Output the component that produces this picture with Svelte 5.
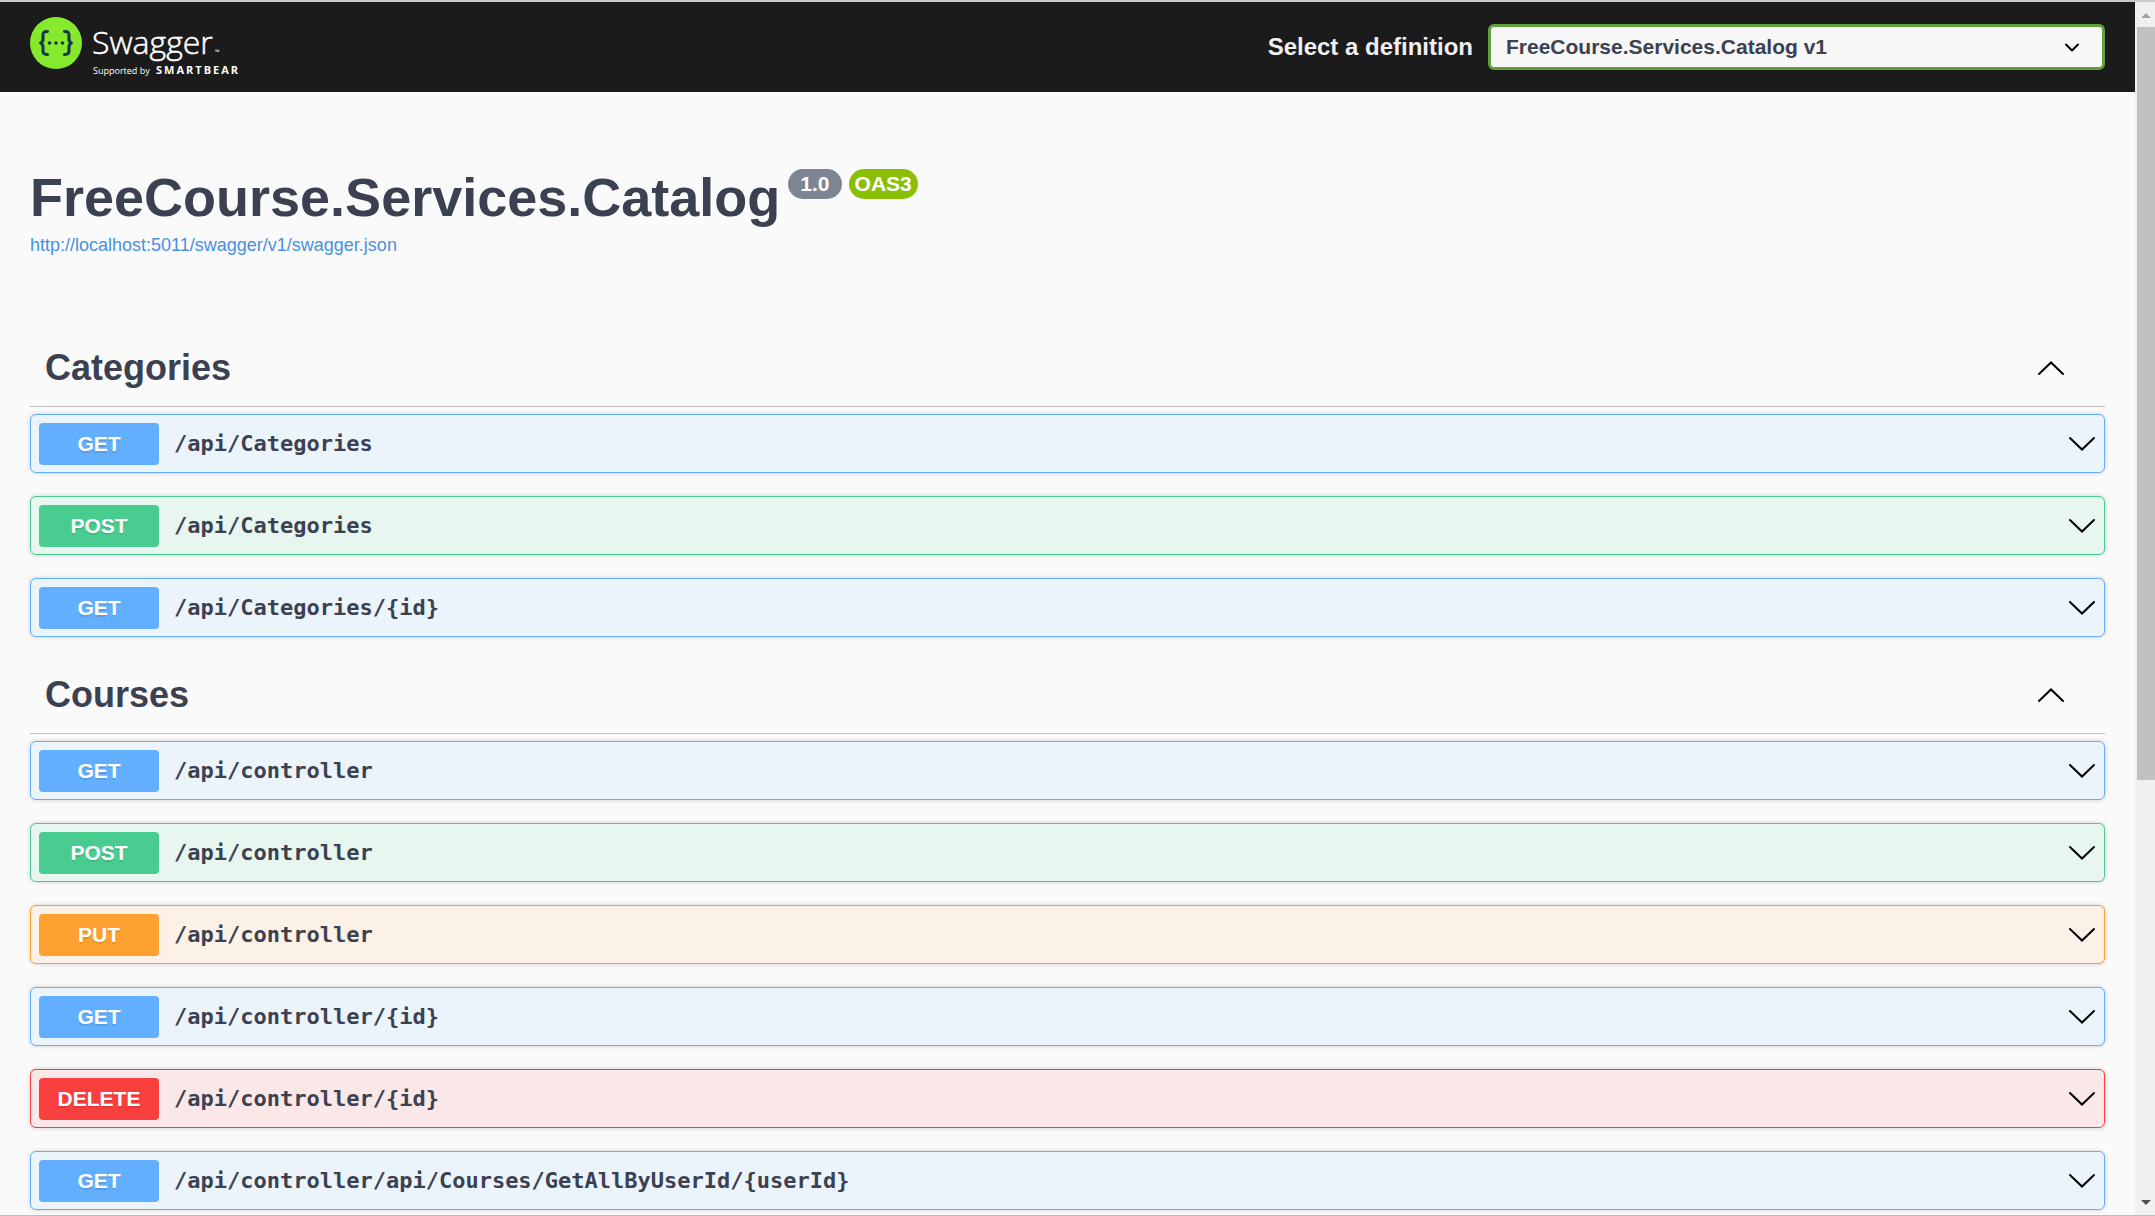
<script>
  const definitions = ['FreeCourse.Services.Catalog v1'];
  let selected = $state(definitions[0]);

  let sections = $state([
    {
      name: 'Categories',
      open: true,
      operations: [
        { method: 'get', path: '/api/Categories' },
        { method: 'post', path: '/api/Categories' },
        { method: 'get', path: '/api/Categories/{id}' }
      ]
    },
    {
      name: 'Courses',
      open: true,
      operations: [
        { method: 'get', path: '/api/controller' },
        { method: 'post', path: '/api/controller' },
        { method: 'put', path: '/api/controller' },
        { method: 'get', path: '/api/controller/{id}' },
        { method: 'delete', path: '/api/controller/{id}' },
        { method: 'get', path: '/api/controller/api/Courses/GetAllByUserId/{userId}' }
      ]
    }
  ]);
</script>

{#snippet chevron(down)}
  <svg class="chevron" class:down width="30" height="30" viewBox="0 0 30 30" aria-hidden="true">
    <path d="M3 21 15 9.500 27 21" />
  </svg>
{/snippet}

<div class="window">
  <div class="page">
    <header class="topbar">
      <a class="logo" href="#top" aria-label="Swagger, supported by SmartBear">
        <svg width="220" height="60" viewBox="0 0 220 60">
          <circle cx="26" cy="26" r="26" fill="#85ea2d" />
          <g fill="none" stroke="#173647" stroke-width="3" stroke-linecap="round" stroke-linejoin="round">
            <path d="M17.500 14.500c-3.800-.2-4.700 1.300-4.500 4.500.2 3.600.3 6.300-2.500 7 2.800.7 2.700 3.400 2.500 7-.2 3.200.7 4.700 4.500 4.500" />
            <path d="M34.500 14.500c3.800-.2 4.700 1.300 4.500 4.500-.2 3.600-.3 6.300 2.500 7-2.800.7-2.700 3.400-2.500 7 .2 3.200-.7 4.700-4.500 4.500" />
          </g>
          <g fill="#173647">
            <circle cx="19.500" cy="26" r="1.800" />
            <circle cx="26" cy="26" r="1.800" />
            <circle cx="32.500" cy="26" r="1.800" />
          </g>
          <text class="wordmark" x="62" y="37">Swagger</text>
          <text class="tm" x="185" y="37">™</text>
          <text class="support" x="63" y="57">Supported by</text>
          <text class="brand" x="126" y="57">SMARTBEAR</text>
        </svg>
      </a>
      <form class="definition">
        <label for="definition">Select a definition</label>
        <div class="select-box">
          <select id="definition" bind:value={selected}>
            {#each definitions as d}
              <option value={d}>{d}</option>
            {/each}
          </select>
          <svg width="18" height="12" viewBox="0 0 18 12" aria-hidden="true">
            <path d="M3 2.500 9 8.500 15 2.500" />
          </svg>
        </div>
      </form>
    </header>

    <main>
      <div class="info">
        <div class="title-row">
          <h1>FreeCourse.Services.Catalog</h1>
          <div class="badges">
            <span class="badge version">1.0</span>
            <span class="badge oas">OAS3</span>
          </div>
        </div>
        <a href="http://localhost:5011/swagger/v1/swagger.json">http://localhost:5011/swagger/v1/swagger.json</a>
      </div>

      {#each sections as section}
        <section>
          <h2>
            <button class="tag" aria-expanded={section.open} onclick={() => (section.open = !section.open)}>
              {section.name}
              {@render chevron(!section.open)}
            </button>
          </h2>
          {#if section.open}
            <div class="operations">
              {#each section.operations as op}
                <button class="operation {op.method}">
                  <span class="method">{op.method.toUpperCase()}</span>
                  <span class="path">{op.path}</span>
                  {@render chevron(true)}
                </button>
              {/each}
            </div>
          {/if}
        </section>
      {/each}
    </main>
  </div>

  <div class="scrollbar" aria-hidden="true">
    <svg class="up" width="18" height="25" viewBox="0 0 18 25"><path d="M4 16 9 11 14 16Z" /></svg>
    <div class="track"><div class="thumb"></div></div>
    <svg class="low" width="18" height="25" viewBox="0 0 18 25"><path d="M4 10 9 15 14 10Z" /></svg>
  </div>
</div>

<style>
  :global(body) {
    margin: 0;
    background: #fafafa;
  }

  .window {
    box-sizing: border-box;
    height: 100vh;
    display: flex;
    border-top: 2px solid #cacbcb;
    border-bottom: 1px solid #bdbdbd;
    background: #fafafa;
    color: #3b4151;
    font-family: 'Liberation Sans', Arial, sans-serif;
  }

  .page {
    flex: 1;
    min-width: 0;
    overflow-y: auto;
    scrollbar-width: none;
  }

  .topbar {
    box-sizing: border-box;
    height: 90px;
    padding: 0 30px;
    display: flex;
    align-items: center;
    justify-content: space-between;
    background: #1b1b1b;
  }

  .logo {
    display: flex;
  }

  .logo text {
    font-family: 'Open Sans', sans-serif;
    fill: #fff;
  }

  .logo .wordmark {
    font-size: 32px;
    font-weight: 300;
    stroke: #fff;
    stroke-width: 0.5px;
  }

  .logo .tm {
    font-size: 6px;
  }

  .logo .support {
    font-size: 9px;
  }

  .logo .brand {
    font-size: 11px;
    font-weight: 700;
    letter-spacing: 2px;
  }

  .definition {
    flex: 1;
    display: flex;
    align-items: center;
    justify-content: flex-end;
    gap: 15px;
  }

  .definition label {
    color: #f0f0f0;
    font-size: 24px;
    font-weight: 700;
  }

  .select-box {
    position: relative;
    min-width: 320px;
    flex: 0 1 617px;
  }

  .select-box select {
    appearance: none;
    width: 100%;
    height: 46px;
    padding: 0 60px 2px 15px;
    border: 3px solid #62a03f;
    border-radius: 6px;
    background: #f7f7f7;
    color: #3b4151;
    font-family: inherit;
    font-size: 21px;
    font-weight: 700;
  }

  .select-box svg {
    position: absolute;
    right: 24px;
    top: 18px;
    pointer-events: none;
  }

  .select-box path {
    fill: none;
    stroke: #000;
    stroke-width: 2;
    stroke-linecap: round;
    stroke-linejoin: round;
  }

  main {
    padding: 77px 30px 0;
  }

  .info {
    padding-bottom: 72px;
  }

  .info a {
    display: block;
    color: #4990e2;
    font-size: 18px;
    line-height: 24px;
    text-decoration: none;
  }

  .title-row {
    height: 64px;
    display: flex;
    align-items: flex-start;
    gap: 8px;
  }

  h1 {
    margin: 0;
    font-size: 54px;
    line-height: 56px;
  }

  .badges {
    display: flex;
    gap: 7px;
  }

  .badge {
    height: 30px;
    border-radius: 15px;
    color: #fff;
    font-size: 21px;
    font-weight: 700;
    line-height: 30px;
  }

  .version {
    padding: 0 12px;
    background: #7d8492;
  }

  .oas {
    padding: 0 6px;
    background: #89bf04;
  }

  h2 {
    margin: 0 0 7px;
    font-size: 36px;
  }

  button {
    font: inherit;
    color: inherit;
    cursor: pointer;
  }

  .tag {
    box-sizing: border-box;
    width: 100%;
    height: 78px;
    padding: 0 39px 0 15px;
    display: flex;
    align-items: center;
    justify-content: space-between;
    border: 0;
    border-bottom: 1px solid #bfc0c3;
    background: none;
    text-align: left;
  }

  .chevron {
    flex: none;
    fill: none;
    stroke: #000;
    stroke-width: 2;
    stroke-linecap: round;
  }

  .chevron.down {
    transform: rotate(180deg);
  }

  .operations {
    display: flex;
    flex-direction: column;
    gap: 23px;
    padding-bottom: 19px;
  }

  .operation {
    box-sizing: border-box;
    width: 100%;
    height: 59px;
    padding: 0 7px 0 8px;
    display: flex;
    align-items: center;
    gap: 15px;
    border: 1px solid;
    border-radius: 6px;
    box-shadow: 0 0 4px rgba(0, 0, 0, 0.19);
    text-align: left;
  }

  .method {
    width: 120px;
    border-radius: 4px;
    color: #fff;
    font-size: 21px;
    font-weight: 700;
    line-height: 42px;
    text-align: center;
    text-shadow: 0 2px 0 rgba(0, 0, 0, 0.1);
  }

  .path {
    flex: 1;
    font-family: 'DejaVu Sans Mono', monospace;
    font-size: 22px;
    font-weight: 700;
  }

  .get {
    border-color: #61affe;
    background: #ebf3fb;
  }

  .get .method {
    background: #61affe;
  }

  .post {
    border-color: #49cc90;
    background: #e8f6f0;
  }

  .post .method {
    background: #49cc90;
  }

  .put {
    border-color: #fca130;
    background: #fbf1e6;
  }

  .put .method {
    background: #fca130;
  }

  .delete {
    border-color: #f93e3e;
    background: #fae7e7;
  }

  .delete .method {
    background: #f93e3e;
  }

  .scrollbar {
    box-sizing: border-box;
    width: 20px;
    padding-left: 2px;
    display: flex;
    flex-direction: column;
    background: #f0f0f0;
  }

  .scrollbar .up {
    fill: #a3a3a3;
  }

  .scrollbar .low {
    fill: #505050;
  }

  .track {
    flex: 1;
    display: grid;
    grid-template-rows: 753fr 410fr;
  }

  .thumb {
    background: #c1c1c1;
  }
</style>
